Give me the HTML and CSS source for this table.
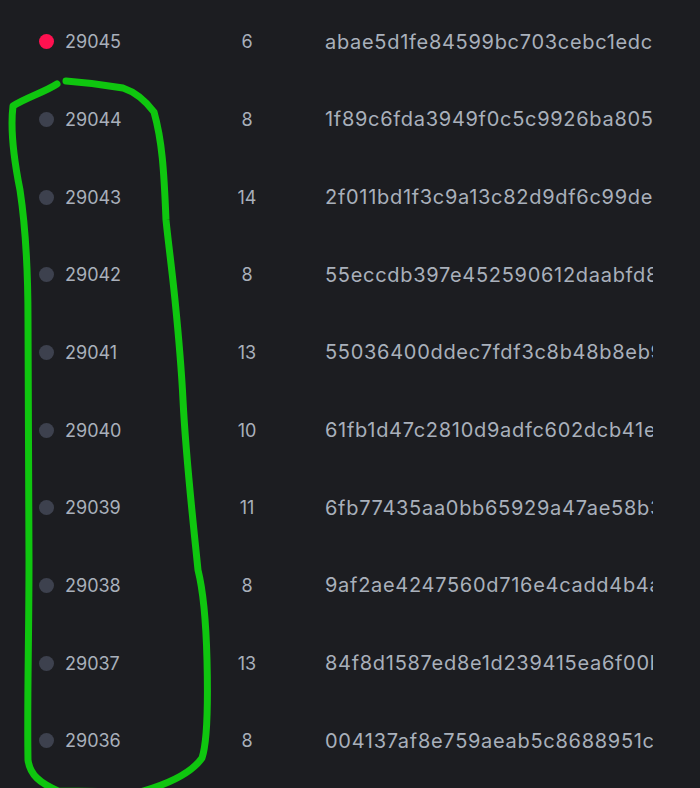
FILE: index.html
```html
<!DOCTYPE html>
<html lang="en">
<head>
  <meta charset="UTF-8" />
  <meta name="viewport" content="width=device-width, initial-scale=1.0" />
  <title>Blocks</title>
  <link rel="stylesheet" href="styles.css">
</head>
<body>
<main class="block-list">
  <div class="row"><span class="dot live"></span><span class="height">29045</span><span class="count">6</span><span class="hash">abae5d1fe84599bc703cebc1edc4f2a9</span></div>
  <div class="row"><span class="dot"></span><span class="height">29044</span><span class="count">8</span><span class="hash">1f89c6fda3949f0c5c9926ba8053e1d7</span></div>
  <div class="row"><span class="dot"></span><span class="height">29043</span><span class="count">14</span><span class="hash">2f011bd1f3c9a13c82d9df6c99de7b40</span></div>
  <div class="row"><span class="dot"></span><span class="height">29042</span><span class="count">8</span><span class="hash">55eccdb397e452590612daabfd8c31e6</span></div>
  <div class="row"><span class="dot"></span><span class="height">29041</span><span class="count">13</span><span class="hash">55036400ddec7fdf3c8b48b8eb92a4f1</span></div>
  <div class="row"><span class="dot"></span><span class="height">29040</span><span class="count">10</span><span class="hash">61fb1d47c2810d9adfc602dcb41e8a07</span></div>
  <div class="row"><span class="dot"></span><span class="height">29039</span><span class="count">11</span><span class="hash">6fb77435aa0bb65929a47ae58b3cd912</span></div>
  <div class="row"><span class="dot"></span><span class="height">29038</span><span class="count">8</span><span class="hash">9af2ae4247560d716e4cadd4b4a1f6e3</span></div>
  <div class="row"><span class="dot"></span><span class="height">29037</span><span class="count">13</span><span class="hash">84f8d1587ed8e1d239415ea6f00b2c58</span></div>
  <div class="row"><span class="dot"></span><span class="height">29036</span><span class="count">8</span><span class="hash">004137af8e759aeab5c8688951c7d2e4</span></div>
</main>

<!-- marker annotation drawn over the list -->
<svg class="scribble" width="700" height="788" viewBox="0 0 700 788">
  <path d="M57,84 C45,92 25,98 13,106 C10,130 14,160 20,190 C26,230 28,270 28,320 L29,560 C29,640 27,700 28,760 C30,775 40,783 58,791 L140,792 C165,785 190,775 202,758 C208,740 208,700 207,660 C206,620 203,590 198,570 C193,520 186,460 183,400 C181,360 178,330 175,300 C172,270 168,240 166,220 C164,170 162,140 154,112 C145,100 135,92 123,88 C100,84 80,82 66,81"/>
</svg>
</body>
</html>
```

FILE: styles.css
```css
* {
  margin: 0;
  padding: 0;
  box-sizing: border-box;
}

body {
  font-family: 'Inter', sans-serif;
  background-color: #1c1d21;
  color: #a9b0bb;
  overflow: hidden;
}

.block-list {
  padding-top: 3px;
}

.row {
  display: flex;
  align-items: center;
  height: 77.67px;
  padding-left: 39px;
  font-size: 18px;
}

.dot {
  width: 15px;
  height: 15px;
  border-radius: 50%;
  background-color: #3d414e;
  margin-right: 11px;
  flex-shrink: 0;
}

.dot.live {
  background-color: #ff1150;
}

.height {
  width: 120px;
}

.count {
  width: 124px;
  text-align: center;
}

.hash {
  margin-left: 16px;
  width: 328px;
  overflow: hidden;
  white-space: nowrap;
  font-size: 20px;
  letter-spacing: 0.7px;
}

.scribble {
  position: absolute;
  top: 0;
  left: 0;
  pointer-events: none;
}

.scribble path {
  fill: none;
  stroke: #0fc60f;
  stroke-width: 7;
  stroke-linecap: round;
  stroke-linejoin: round;
}
```
